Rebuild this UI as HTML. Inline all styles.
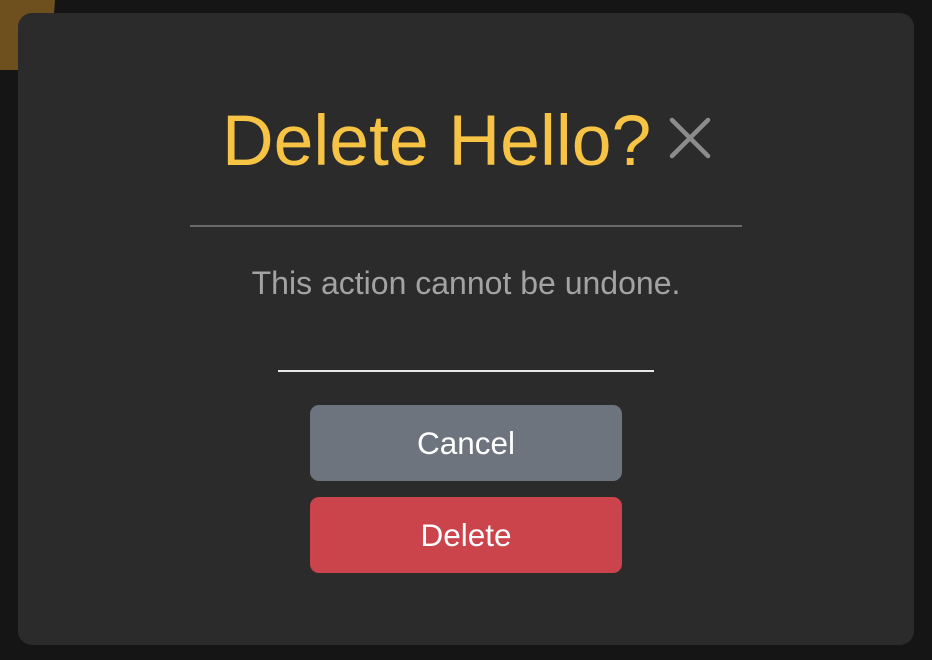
<!DOCTYPE html>
<html><head><meta charset="utf-8"><style>
html,body{margin:0;padding:0;width:932px;height:660px;overflow:hidden;background:#151515;font-family:"Liberation Sans",Arial,sans-serif;}
.brown{position:absolute;left:0;top:0;width:170px;height:70px;background:#6e4f1e;clip-path:polygon(0 0,55px 0,50px 70px,0 70px);}
.modal{position:absolute;left:18px;top:13px;width:896px;height:632px;background:#2b2b2b;border-radius:14px;}
.title{position:absolute;left:222px;top:98px;font-size:71.5px;color:#f6c344;line-height:86px;white-space:nowrap;}
.x{position:absolute;left:668px;top:116px;}
.hr{position:absolute;left:190px;top:225px;width:552px;height:2px;background:#6a6a6a;}
.msg{position:absolute;left:0;width:932px;top:264px;text-align:center;font-size:32px;color:#a3a3a3;line-height:38px;}
.inp{position:absolute;left:278px;top:370px;width:376px;height:2px;background:#e8e8e8;}
.btn{position:absolute;left:310px;width:312px;height:76px;border-radius:9px;color:#fff;font-size:31.5px;text-align:center;line-height:76px;}
</style></head><body>
<div class="brown"></div>
<div class="modal"></div>
<div class="title">Delete Hello?</div>
<svg class="x" width="44" height="44" viewBox="0 0 44 44"><path d="M4 4L40 40M40 4L4 40" stroke="#8c8c8c" stroke-width="4.5" stroke-linecap="round"/></svg>
<div class="hr"></div>
<div class="msg">This action cannot be undone.</div>
<div class="inp"></div>
<div class="btn" style="top:405px;background:#6d747d">Cancel</div>
<div class="btn" style="top:497px;background:#cb444b">Delete</div>
</body></html>
